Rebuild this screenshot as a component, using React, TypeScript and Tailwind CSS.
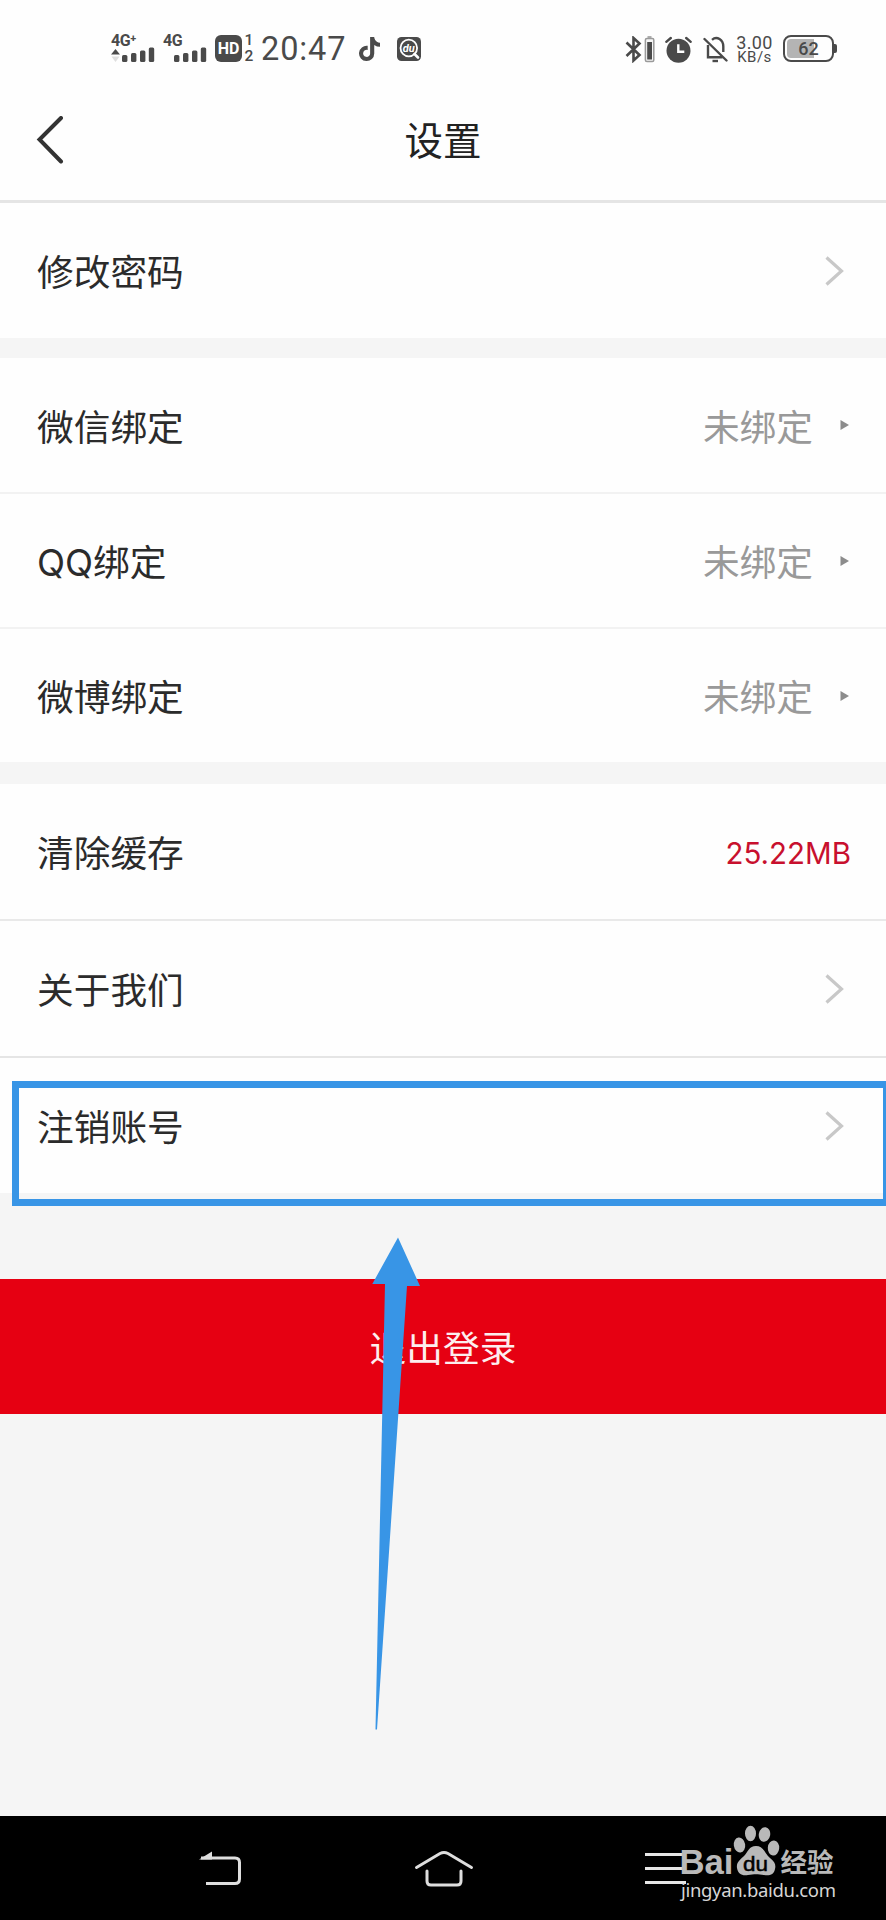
import type { ReactNode } from "react";
import { FaTiktok } from "react-icons/fa6";

function SignalBars() {
  return (
    <svg width="33" height="15" viewBox="0 0 33 15" fill="#4a4a4a">
      <rect x="0" y="8" width="5.4" height="7" rx="1.5" />
      <rect x="9" y="6" width="5.4" height="9" rx="1.5" />
      <rect x="18" y="3.5" width="5.4" height="11.5" rx="1.5" />
      <rect x="26.8" y="0.5" width="5.4" height="14.5" rx="1.5" />
    </svg>
  );
}

function StatusBar() {
  return (
    <div className="flex h-[97px] items-start pt-[34px] text-[#4a4a4a]">
      <div className="ml-[111px] flex h-7 w-[44px] flex-col">
        <span className="h-[13px] text-[16px] leading-[14px] font-bold tracking-[-0.5px]">4G⁺</span>
        <div className="flex items-end justify-between">
          <svg width="9" height="13" viewBox="0 0 9 13">
            <path d="M0 5.5 4.5 0 9 5.5Z" fill="#4a4a4a" />
            <path d="M0.5 7.5H8.5L4.5 13Z" fill="#dedede" />
          </svg>
          <SignalBars />
        </div>
      </div>
      <div className="ml-[8px] flex h-7 w-[44px] flex-col">
        <span className="h-[13px] text-[16px] leading-[14px] font-bold tracking-[-0.5px]">4G</span>
        <div className="flex justify-end">
          <SignalBars />
        </div>
      </div>
      <div className="mt-[1px] ml-[8px] flex h-[27px] w-[27px] items-center justify-center rounded-[6px] bg-[#4a4a4a] text-[16px] font-bold text-white">
        HD
      </div>
      <div className="-mt-[1px] ml-[2px] flex w-[10px] flex-col text-center text-[15.5px] leading-[15.5px] font-medium">
        <span>1</span>
        <span>2</span>
      </div>
      <span className="ml-[7px] w-[88px] text-[32.5px] leading-[31px] tracking-[0.9px]">20:47</span>
      <FaTiktok className="mt-[3px] ml-[9px] h-6 w-[23px]" />
      <svg className="mt-[3px] ml-[16px]" width="24" height="24" viewBox="0 0 24 24">
        <rect width="24" height="24" rx="4.5" fill="#4a4a4a" />
        <circle cx="11.8" cy="11" r="8.3" fill="none" stroke="#fff" strokeWidth="1.8" />
        <path d="m17.5 17 3.5 3.5" stroke="#fff" strokeWidth="2.6" strokeLinecap="round" />
        <text x="11.8" y="15" textAnchor="middle" fontSize="11" fontWeight="700" fontStyle="italic" fill="#fff">du</text>
      </svg>

      <svg className="mt-[2px] ml-auto" width="30" height="27" viewBox="0 0 30 27">
        <path d="M1.5 6.5 14.5 19 8.5 24.5V2L14.5 7.5 1.5 20" fill="none" stroke="#4a4a4a" strokeWidth="2.6" />
        <rect x="20.4" y="2.6" width="8.4" height="23" rx="1.5" fill="#f5f5f5" stroke="#9a9a9a" strokeWidth="1.5" />
        <path d="M22.5 1H26.5" stroke="#9a9a9a" strokeWidth="1.6" />
        <rect x="22.2" y="6" width="4.8" height="17.5" fill="#4a4a4a" />
      </svg>
      <svg className="mt-[2px] ml-[10px]" width="27" height="27" viewBox="0 0 27 27">
        <circle cx="13.5" cy="14.8" r="12" fill="#4a4a4a" />
        <path d="M1.3 5.8 5.8 2M25.7 5.8 21.2 2" stroke="#4a4a4a" strokeWidth="2.4" strokeLinecap="round" />
        <path d="M13.3 8.3V15.8H19.3" fill="none" stroke="#fff" strokeWidth="2.4" />
      </svg>
      <svg className="mt-[2px] ml-[11px]" width="25" height="27" viewBox="0 0 25 27" fill="none" stroke="#4a4a4a" strokeWidth="2.4">
        <path d="M5 9V21.3H19.5M9 3.8C14-0.5 20.3 4 20.3 10.5V16" />
        <path d="M1.5 3 23.5 24.5" strokeLinecap="round" />
        <path d="M9.5 25H15" />
      </svg>
      <div className="ml-[6px] flex w-[41px] flex-col items-center">
        <span className="text-[18px] leading-[17px] tracking-[0.4px]">3.00</span>
        <span className="text-[15px] leading-[13px] tracking-[0.5px]">KB/s</span>
      </div>
      <div className="mt-[1px] mr-[49px] ml-[8px] flex items-center">
        <div className="relative flex h-[27px] w-[51px] items-center justify-center rounded-[8px] border-2 border-[#4a4a4a] text-[18px] font-medium">
          <div className="absolute inset-y-[2px] left-[2px] w-[27px] rounded-l-[4px] bg-[#b4b4b4]" />
          <span className="relative">62</span>
        </div>
        <div className="h-[9px] w-[3px] rounded-r-[2px] bg-[#4a4a4a]" />
      </div>
    </div>
  );
}

function Chevron() {
  return (
    <svg className="mr-[41px]" width="20" height="30" viewBox="0 0 20 30" fill="none" stroke="#c8c8c8" strokeWidth="3.2">
      <path d="M1.5 1.500 16.500 15 1.500 28.500" />
    </svg>
  );
}

function Unbound() {
  return (
    <div className="mr-[37px] flex items-center text-[#999]">
      <span className="pt-[5px]">未绑定</span>
      <svg className="ml-[27px]" width="9" height="10" viewBox="0 0 9 10" fill="#8c8c8c">
        <path d="M0.500 0 9 5 0.500 10Z" />
      </svg>
    </div>
  );
}

interface RowProps {
  label: string;
  className: string;
  children: ReactNode;
}

function Row({ label, className, children }: RowProps) {
  return (
    <div className={`flex items-center justify-between bg-[#fefefe] pl-[37px] text-[36.7px] leading-[44px] text-[#2b2b2b] ${className}`}>
      <span className="pt-[5px]">{label}</span>
      {children}
    </div>
  );
}

function Watermark() {
  return (
    <svg className="absolute top-[1820px] left-[676px]" width="166" height="90" viewBox="0 0 166 90" fill="#b9b9b9">
      <text x="3.5" y="54" fontSize="34.500" fontWeight="700" textLength="54" lengthAdjust="spacingAndGlyphs" className="font-['Liberation_Sans',sans-serif]">Bai</text>
      <ellipse cx="63.5" cy="25" rx="5.7" ry="7.5" transform="rotate(-8 63.5 25)" />
      <ellipse cx="74.5" cy="13.5" rx="5.5" ry="7.8" />
      <ellipse cx="88.5" cy="14.5" rx="5.7" ry="7.3" transform="rotate(10 88.5 14.5)" />
      <ellipse cx="97.5" cy="28" rx="5.7" ry="7.5" transform="rotate(5 97.5 28)" />
      <path d="M80 26C88 26 89 34 94 38S100 45 99 49C98 55 93 56 88 55 82 54 78 54 72 55 66 56 62 54 61 48 60 42 65 39 68 36 72 32 73 26 80 26Z" />
      <text x="67" y="51" fontSize="21" fill="#000" stroke="#000" strokeWidth="0.5" textLength="25" lengthAdjust="spacingAndGlyphs" className="font-['Liberation_Sans',sans-serif]">du</text>
      <text x="104.5" y="52" fontSize="26.5" fontWeight="700" className="font-['Noto_Sans_CJK_SC',sans-serif]">经验</text>
      <text x="5" y="77" fontSize="18.5" textLength="155" fill="#d6d6d6" className="font-['Noto_Sans',sans-serif]">jingyan.baidu.com</text>
    </svg>
  );
}

export default function App() {
  return (
    <div className="relative flex h-[1920px] w-[886px] flex-col overflow-hidden bg-[#f5f5f5] font-['Roboto','Noto_Sans_CJK_SC',sans-serif]">
      <header className="h-[203px] shrink-0 border-b-[3px] border-[#e5e5e5] bg-[#fefefe]">
        <StatusBar />
        <div className="grid h-[86px] grid-cols-3 items-center">
          <svg className="ml-[36px]" width="28" height="48" viewBox="0 0 28 48" fill="none" stroke="#333" strokeWidth="4" strokeLinecap="round">
            <path d="M25 2 3.5 23.5 25 45.5" />
          </svg>
          <h1 className="pt-[4px] text-center text-[38.5px] leading-[44px] text-[#222]">设置</h1>
        </div>
      </header>

      <main className="flex flex-1 flex-col font-['Inter','Noto_Sans_CJK_SC',sans-serif]">
        <Row label="修改密码" className="h-[135px]">
          <Chevron />
        </Row>

        <Row label="微信绑定" className="mt-[20px] h-[136px] border-b-2 border-[#f2f2f2]">
          <Unbound />
        </Row>
        <Row label="QQ绑定" className="h-[135px] border-b-2 border-[#f2f2f2]">
          <Unbound />
        </Row>
        <Row label="微博绑定" className="h-[133px]">
          <Unbound />
        </Row>

        <Row label="清除缓存" className="mt-[22px] h-[137px] border-b-2 border-[#e9e9e9]">
          <span className="mr-[35px] pt-[2px] text-[29.5px] text-[#c8102e]">25.22MB</span>
        </Row>
        <Row label="关于我们" className="h-[137px] border-b-2 border-[#e5e5e5]">
          <Chevron />
        </Row>
        <Row label="注销账号" className="h-[135px]">
          <Chevron />
        </Row>

        <button className="mt-[86px] h-[135px] bg-[#e60012] pt-[4px] text-[36.7px] leading-[44px] text-[#fdeeee]">退出登录</button>
      </main>

      <nav className="flex h-[104px] shrink-0 items-center bg-black">
        <svg className="ml-[198px]" width="44" height="38" viewBox="0 0 44 38" fill="none" stroke="#dedede" strokeWidth="3">
          <path d="M3 9H37Q41.500 9 41.500 13.500V30Q41.500 34.500 37 34.500H8" />
          <path d="M1 10.500 14 2.500V10.500Z" fill="#dedede" stroke="none" />
        </svg>
        <svg className="ml-[172px]" width="60" height="38" viewBox="0 0 60 38" fill="none" stroke="#dedede" strokeWidth="3" strokeLinecap="round">
          <path d="M2.500 18.500 26 4.500Q30 2.500 34 4.500L57.500 18.500" />
          <path d="M13 22V32Q13 36 17 36H43Q47 36 47 32V22" />
        </svg>
        <div className="ml-[171px] flex w-[41px] flex-col gap-[11px]">
          <span className="h-[3px] bg-[#e6e6e6]" />
          <span className="h-[3px] bg-[#e6e6e6]" />
          <span className="h-[3px] bg-[#e6e6e6]" />
        </div>
      </nav>

      {/* annotations on top of the screen */}
      <div className="absolute top-[1081px] left-[12px] h-[125px] w-[878px] border-[7px] border-[#3895e6]" />
      <svg className="absolute top-[1237px] left-[372px]" width="48" height="494" viewBox="0 0 48 494" fill="#3895e6">
        <path d="M26 0.500 48 49H35L5 492.500H3.500L13 47H0.300Z" />
      </svg>
      <Watermark />
    </div>
  );
}
